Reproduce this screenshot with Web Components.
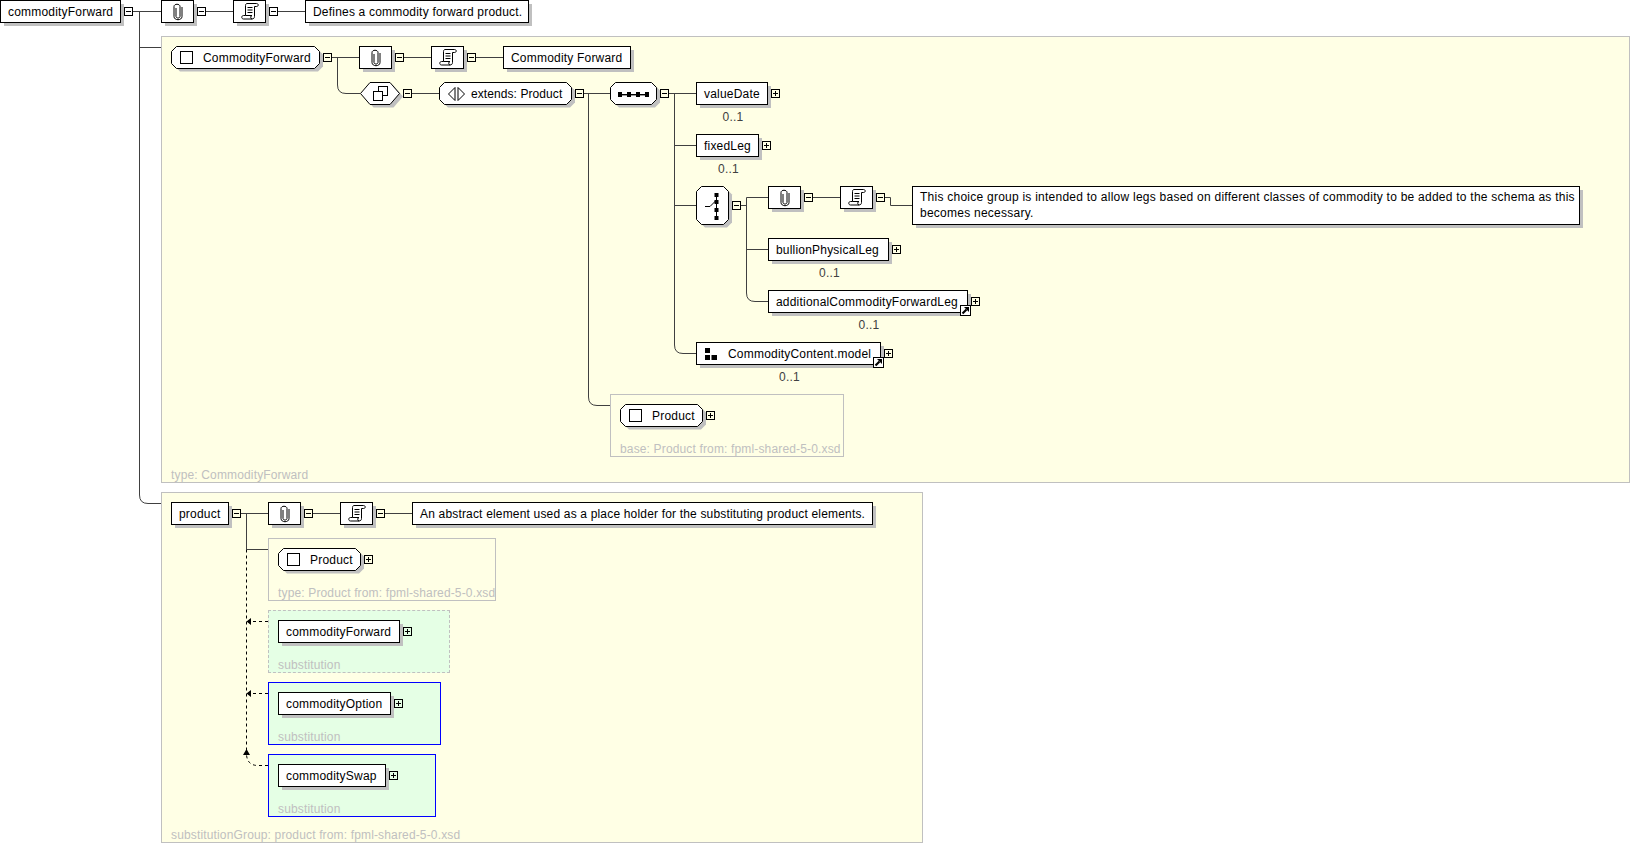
<!DOCTYPE html>
<html>
<head>
<meta charset="utf-8">
<title>commodityForward</title>
<style>
  html, body { margin: 0; background: #fff; overflow: hidden; }
  body { font: 12px "Liberation Sans", Arial, sans-serif; letter-spacing: .2px; color: #000; }
</style>
</head>
<body>
<xs-diagram>
  <xs-panel x="161" y="36" w="1469" h="447" label="type: CommodityForward"></xs-panel>
  <xs-panel x="610" y="394" w="234" h="63" label="base: Product from: fpml-shared-5-0.xsd"></xs-panel>
  <xs-panel x="161" y="492" w="762" h="351" label="substitutionGroup: product from: fpml-shared-5-0.xsd"></xs-panel>
  <xs-panel x="268" y="538" w="228" h="63" label="type: Product from: fpml-shared-5-0.xsd"></xs-panel>
  <xs-panel x="268" y="610" w="182" h="63" kind="dashed" label="substitution"></xs-panel>
  <xs-panel x="268" y="682" w="173" h="63" kind="blue" label="substitution"></xs-panel>
  <xs-panel x="268" y="754" w="168" h="63" kind="blue" label="substitution"></xs-panel>

  <xs-links></xs-links>

  <xs-node x="0" y="0" w="121" toggle="minus">commodityForward</xs-node>
  <xs-node x="161" y="0" w="33" toggle="minus"><xs-icon name="clip"></xs-icon></xs-node>
  <xs-node x="233" y="0" w="33" toggle="minus"><xs-icon name="scroll"></xs-icon></xs-node>
  <xs-node x="305" y="0" w="224">Defines a commodity forward product.</xs-node>

  <xs-node x="171" y="46" w="149" shape="octagon" toggle="minus"><xs-icon name="square"></xs-icon>CommodityForward</xs-node>
  <xs-node x="359" y="46" w="33" toggle="minus"><xs-icon name="clip"></xs-icon></xs-node>
  <xs-node x="431" y="46" w="33" toggle="minus"><xs-icon name="scroll"></xs-icon></xs-node>
  <xs-node x="503" y="46" w="128">Commodity Forward</xs-node>

  <xs-node x="360" y="82" w="40" shape="hexagon" toggle="minus"><xs-icon name="extension"></xs-icon></xs-node>
  <xs-node x="439" y="82" w="133" shape="octagon" toggle="minus" style="letter-spacing:.08px"><xs-icon name="extends"></xs-icon>extends: Product</xs-node>
  <xs-node x="610" y="82" w="47" shape="octagon" toggle="minus"><xs-icon name="sequence"></xs-icon></xs-node>

  <xs-node x="696" y="82" w="72" toggle="plus" card="0..1">valueDate</xs-node>
  <xs-node x="696" y="134" w="63" toggle="plus" card="0..1">fixedLeg</xs-node>
  <xs-node x="696" y="186" w="33" h="39" shape="octagon" toggle="minus"><xs-icon name="choice"></xs-icon></xs-node>

  <xs-node x="768" y="186" w="33" toggle="minus"><xs-icon name="clip"></xs-icon></xs-node>
  <xs-node x="840" y="186" w="33" toggle="minus"><xs-icon name="scroll"></xs-icon></xs-node>
  <xs-node x="912" y="186" w="668" h="39" multiline>This choice group is intended to allow legs based on different classes of commodity to be added to the schema as this<br>becomes necessary.</xs-node>

  <xs-node x="768" y="238" w="121" toggle="plus" card="0..1">bullionPhysicalLeg</xs-node>
  <xs-node x="768" y="290" w="200" toggle="plus" card="0..1" ref>additionalCommodityForwardLeg</xs-node>
  <xs-node x="696" y="342" w="185" toggle="plus" card="0..1" ref><xs-icon name="model"></xs-icon>CommodityContent.model</xs-node>

  <xs-node x="620" y="404" w="83" shape="octagon" toggle="plus"><xs-icon name="square"></xs-icon>Product</xs-node>

  <xs-node x="171" y="502" w="58" toggle="minus">product</xs-node>
  <xs-node x="268" y="502" w="33" toggle="minus"><xs-icon name="clip"></xs-icon></xs-node>
  <xs-node x="340" y="502" w="33" toggle="minus"><xs-icon name="scroll"></xs-icon></xs-node>
  <xs-node x="412" y="502" w="461" style="letter-spacing:.175px">An abstract element used as a place holder for the substituting product elements.</xs-node>

  <xs-node x="278" y="548" w="83" shape="octagon" toggle="plus"><xs-icon name="square"></xs-icon>Product</xs-node>
  <xs-node x="278" y="620" w="122" toggle="plus">commodityForward</xs-node>
  <xs-node x="278" y="692" w="113" toggle="plus">commodityOption</xs-node>
  <xs-node x="278" y="764" w="108" toggle="plus">commoditySwap</xs-node>
</xs-diagram>

<script>
const SVG_ICONS = {
  clip: {
    w: 10, h: 18, body: `
      <path d="M3 5V13.5C3 15.5 7 15.5 7 13.5V3.5C7 .5 1 .5 1 3.5V13.5C1 17.8 9 17.8 9 13.5V4" fill="none" stroke="#000"/>` },
  scroll: {
    w: 18, h: 17, body: `
      <path d="M6 .5H15.5C17.8 .5 17.8 3.5 15.5 3.5H13.5V13.5C13.5 15 12.5 16 11 16H2.5C.2 16 .2 12.5 2.5 12.5H4.5V2.5C4.5 1.5 5 .5 6 .5Z" fill="#fff" stroke="#000"/>
      <path d="M11 16C9.3 16 9.3 12.5 11 12.5H4.5M6.5 4.5H11.5M6.5 7H11.5M6.5 9.5H11.5" fill="none" stroke="#000"/>` },
  square: { w: 13, h: 13, gap: 10, body: `<rect x=".5" y=".5" width="12" height="12" fill="#fff" stroke="#000"/>` },
  extension: {
    w: 15, h: 15, body: `
      <rect x="5.5" y=".5" width="9" height="9" fill="#fff" stroke="#000"/>
      <rect x=".5" y="5.5" width="9" height="9" fill="#fff" stroke="#000"/>` },
  extends: {
    w: 17, h: 14, gap: 6, body: `
      <path d="M7 .5V13.5L.5 7Z" fill="#fff" stroke="#000"/>
      <path d="M10 .5V13.5L16.5 7Z" fill="#fff" stroke="#000"/>` },
  sequence: {
    w: 31, h: 6, body: `
      <path d="M1 3.5H30" stroke="#000"/><path d="M1 4.5H30" stroke="#999"/>
      <path d="M0 1h4v5H0zM9 1h4v5H9zM18 1h4v5h-4zM27 1h4v5h-4z"/>` },
  choice: {
    w: 14, h: 28, dx: -2, body: `
      <path d="M11.5 1V27" stroke="#000"/>
      <path d="M0 14.5H5L11.5 8" fill="none" stroke="#000"/>
      <path d="M9.5 1h4v4h-4zM9.5 8h4v4h-4zM9.5 16h4v4h-4zM9.5 24h4v4h-4z"/>` },
  model: { w: 12, h: 12, gap: 11, body: `<path d="M0 0h5v5H0zM0 7h5v5H0zM6.5 7H12v5H6.5z"/>` }
};

class XsDiagram extends HTMLElement {
  constructor() {
    super();
    this.attachShadow({ mode: "open" });
    this.shadowRoot.innerHTML = `
      <style>
        :host {
          display: block;
          position: relative;
          width: 1631px;
          height: 844px;
          overflow: hidden;
        }
      </style>
      <slot></slot>`;
  }
}

class XsPanel extends HTMLElement {
  constructor() {
    super();
    this.attachShadow({ mode: "open" });
    this.shadowRoot.innerHTML = `
      <style>
        :host {
          position: absolute;
          display: flex;
          align-items: flex-end;
          box-sizing: border-box;
          padding-left: 9px;
          border: 1px solid #c0c0c0;
          background: #ffffe5;
          color: #c0c0c0;
          letter-spacing: .15px;
          line-height: 14px;
          white-space: nowrap;
        }
        :host([kind="dashed"]) { border-style: dashed; background: #e5ffe5; }
        :host([kind="blue"]) { border-color: #00f; background: #e5ffe5; }
      </style>
      <span id="label"></span>`;
  }

  connectedCallback() {
    this.style.left = this.getAttribute("x") + "px";
    this.style.top = this.getAttribute("y") + "px";
    this.style.width = this.getAttribute("w") + "px";
    this.style.height = this.getAttribute("h") + "px";
    this.shadowRoot.getElementById("label").textContent = this.getAttribute("label");
  }
}

class XsToggle extends HTMLElement {
  constructor() {
    super();
    this.attachShadow({ mode: "open" });
    this.shadowRoot.innerHTML = `
      <style>
        :host { display: block; width: 9px; height: 9px; }
        svg { display: block; }
      </style>
      <svg width="9" height="9" viewBox="0 0 9 9" shape-rendering="crispEdges">
        <rect x=".5" y=".5" width="8" height="8" fill="none" stroke="#000"/>
        <path id="mark" stroke="#000"/>
      </svg>`;
  }

  connectedCallback() {
    const plus = this.getAttribute("type") === "plus";
    this.shadowRoot.getElementById("mark").setAttribute("d", plus ? "M2 4.5H7M4.5 2V7" : "M2 4.5H7");
  }
}

class XsIcon extends HTMLElement {
  constructor() {
    super();
    this.attachShadow({ mode: "open" });
  }

  connectedCallback() {
    const icon = SVG_ICONS[this.getAttribute("name")];
    this.shadowRoot.innerHTML = `
      <style>
        :host { display: block; flex: none; margin-right: ${icon.gap || 0}px; margin-left: ${icon.dx || 0}px; }
        svg { display: block; }
      </style>
      <svg width="${icon.w}" height="${icon.h}" viewBox="0 0 ${icon.w} ${icon.h}">${icon.body}</svg>`;
  }
}

class XsNode extends HTMLElement {
  constructor() {
    super();
    this.attachShadow({ mode: "open" });
  }

  outline(w, h) {
    const shape = this.getAttribute("shape");
    const r = w - 0.5;
    const b = h - 0.5;
    const m = h / 2;
    if (shape === "octagon") {
      const c = 5.5;
      return `${c},.5 ${w - c},.5 ${r},${c} ${r},${h - c} ${w - c},${b} ${c},${b} .5,${h - c} .5,${c}`;
    }
    if (shape === "hexagon") {
      return `10,.5 ${w - 10},.5 ${r},${m} ${w - 10},${b} 10,${b} .5,${m}`;
    }
    return `.5,.5 ${r},.5 ${r},${b} .5,${b}`;
  }

  connectedCallback() {
    const w = Number(this.getAttribute("w"));
    const h = Number(this.getAttribute("h") || 23);
    const points = this.outline(w, h);
    const toggle = this.getAttribute("toggle");
    const card = this.getAttribute("card");
    const iconOnly = !this.textContent.trim();
    const crisp = this.hasAttribute("shape") ? "" : 'shape-rendering="crispEdges"';

    this.style.left = this.getAttribute("x") + "px";
    this.style.top = this.getAttribute("y") + "px";
    this.style.width = w + "px";
    this.style.height = h + "px";

    this.shadowRoot.innerHTML = `
      <style>
        :host {
          position: absolute;
          display: block;
          color: #000;
          white-space: nowrap;
        }
        :host([multiline]) { letter-spacing: .245px; }
        svg.box { position: absolute; left: 0; top: 0; overflow: visible; }
        .content {
          position: relative;
          display: flex;
          align-items: center;
          box-sizing: border-box;
          height: 100%;
          padding-left: ${this.querySelector("xs-icon") ? 9 : 8}px;
          line-height: 16px;
        }
        .content.center { justify-content: center; padding-left: 0; }
        .content.multi { display: block; padding-top: 3px; }
        xs-toggle { position: absolute; left: calc(100% + 3px); top: ${Math.round(h / 2 - 4.5)}px; }
        .card {
          position: absolute;
          left: 2px;
          right: 0;
          top: calc(100% + 5px);
          line-height: 14px;
          text-align: center;
          color: #404040;
        }
        .ref { position: absolute; right: -3px; bottom: -3px; display: block; }
      </style>
      <svg class="box" width="${w}" height="${h}" ${crisp}>
        <polygon points="${points}" transform="translate(3.5 3)" fill="#c0c0c0"/>
        <polygon points="${points}" fill="#fff" stroke="#000"/>
      </svg>
      <div class="content ${iconOnly ? "center" : ""} ${this.hasAttribute("multiline") ? "multi" : ""}"><slot></slot></div>
      ${toggle ? `<xs-toggle type="${toggle}"></xs-toggle>` : ""}
      ${card ? `<div class="card">${card}</div>` : ""}
      ${this.hasAttribute("ref") ? `<svg class="ref" width="11" height="11" viewBox="0 0 11 11">
        <rect x=".5" y=".5" width="10" height="10" fill="#fff" stroke="#000" shape-rendering="crispEdges"/>
        <path d="M2.5 8.5L6.5 4.5" stroke="#000" stroke-width="2.2"/><path d="M4 2H9V7Z"/>
      </svg>` : ""}`;
  }
}

class XsLinks extends HTMLElement {
  constructor() {
    super();
    this.attachShadow({ mode: "open" });
    const solid = [
      // top row
      "M133 11.5H161", "M206 11.5H233", "M278 11.5H305",
      "M139.5 11.5V495Q139.5 503.5 148 503.5H161", "M139.5 47.5H161",
      // CommodityForward type
      "M331 57.5H359", "M403 57.5H431", "M476 57.5H503",
      "M337.5 57.5V85Q337.5 93.5 346 93.5H360",
      "M411 93.5H439", "M583 93.5H610",
      "M588.5 93.5V397Q588.5 405.5 597 405.5H610",
      // sequence children
      "M669 93.5H696", "M674.5 93.5V345Q674.5 353.5 683 353.5H696",
      "M674.5 145.5H696", "M674.5 205.5H696",
      // choice children
      "M740 205.5H746.5", "M746.5 197.5H768", "M746.5 197.5V293Q746.5 301.5 755 301.5H768",
      "M746.5 249.5H768", "M813 197.5H840", "M885 197.5H890.5V205.5H912",
      // product
      "M241 513.5H268", "M313 513.5H340", "M385 513.5H412",
      "M246.5 513.5V549.5H268"
    ];
    const dashed = [
      "M246.5 549.5V752",
      "M268 621.5H250", "M268 693.5H250",
      "M268 765.5H258Q247.5 765.5 246.5 755"
    ];
    this.shadowRoot.innerHTML = `
      <style>
        :host { position: absolute; inset: 0; display: block; }
        svg { display: block; }
      </style>
      <svg width="1631" height="844" fill="none">
        <path d="${solid.join("")}" stroke="#404040"/>
        <path d="${dashed.join("")}" stroke="#000" stroke-dasharray="3 3"/>
        <path d="M246.5 621.5L251 618V625ZM246.5 693.5L251 690V697ZM246.5 749L243 755H250Z" fill="#000"/>
      </svg>`;
  }
}

window.customElements.define("xs-diagram", XsDiagram);
window.customElements.define("xs-panel", XsPanel);
window.customElements.define("xs-toggle", XsToggle);
window.customElements.define("xs-icon", XsIcon);
window.customElements.define("xs-node", XsNode);
window.customElements.define("xs-links", XsLinks);
</script>
</body>
</html>
